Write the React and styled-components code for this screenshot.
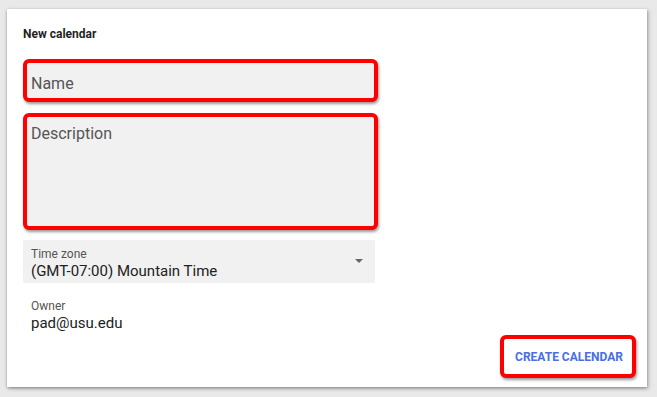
import styled, { createGlobalStyle } from "styled-components";

const GlobalStyle = createGlobalStyle`
  html, body {
    margin: 0;
    padding: 0;
    background: #e9e9e9;
    font-family: Roboto, "Liberation Sans", Arial, sans-serif;
  }
`;

const Page = styled.div`
  padding: 9px 0 0 7px;
  height: 397px;
  box-sizing: border-box;
`;

const Card = styled.div`
  width: 640px;
  height: 378px;
  box-sizing: border-box;
  background: #fff;
  box-shadow: 0 1px 3px rgba(0, 0, 0, 0.35), 2px 2px 4px rgba(0, 0, 0, 0.15);
  padding: 18px 11px 9px 16px;
  display: flex;
  flex-direction: column;
`;

const Title = styled.h1`
  margin: 0 0 18px;
  font-size: 12px;
  line-height: 14px;
  font-weight: 700;
  color: #1f1f1f;
`;

const Annotated = styled.div`
  width: 355px;
  height: ${(p) => p.$h}px;
  box-sizing: border-box;
  border: 4px solid #ff0000;
  border-radius: 6px;
  box-shadow: 1px 2px 3px rgba(0, 0, 0, 0.4);
  background: #f1f1f1;
  padding: ${(p) => p.$pad};
  margin-bottom: ${(p) => p.$mb}px;
  font-size: 16px;
  line-height: 18px;
  color: #555;
`;

const Select = styled.div`
  width: 352px;
  height: 43px;
  box-sizing: border-box;
  background: #f1f1f1;
  border-radius: 2px;
  padding: 5px 8px 0;
  display: flex;
  align-items: center;
  justify-content: space-between;
`;

const Stack = styled.div`
  display: flex;
  flex-direction: column;
`;

const Label = styled.span`
  font-size: 12px;
  line-height: 14px;
  color: #555;
`;

const Value = styled.span`
  font-size: 15px;
  line-height: 20px;
  color: #212121;
`;

const Caret = styled.span`
  width: 0;
  height: 0;
  border-left: 4px solid transparent;
  border-right: 4px solid transparent;
  border-top: 4px solid #666;
  margin: 0 4px 6px 0;
`;

const Owner = styled(Stack)`
  margin-top: 16px;
  padding-left: 8px;
`;

const Footer = styled.div`
  margin-top: auto;
  display: flex;
  justify-content: flex-end;
`;

const Button = styled.button`
  width: 136px;
  height: 43px;
  box-sizing: border-box;
  border: 4px solid #ff0000;
  border-radius: 6px;
  box-shadow: 1px 2px 3px rgba(0, 0, 0, 0.4);
  background: #fff;
  font-family: Roboto, "Liberation Sans", Arial, sans-serif;
  font-size: 12px;
  font-weight: 700;
  color: #4a6ee6;
  text-transform: uppercase;
  padding: 0 0 0 2px;
`;

export default function App() {
  return (
    <>
      <GlobalStyle />
      <Page>
        <Card>
          <Title>New calendar</Title>
          <Annotated $h={43} $pad="12px 4px 0" $mb={11}>
            Name
          </Annotated>
          <Annotated $h={117} $pad="8px 4px 0" $mb={10}>
            Description
          </Annotated>
          <Select>
            <Stack>
              <Label>Time zone</Label>
              <Value>(GMT-07:00) Mountain Time</Value>
            </Stack>
            <Caret />
          </Select>
          <Owner>
            <Label>Owner</Label>
            <Value>pad@usu.edu</Value>
          </Owner>
          <Footer>
            <Button>Create calendar</Button>
          </Footer>
        </Card>
      </Page>
    </>
  );
}
